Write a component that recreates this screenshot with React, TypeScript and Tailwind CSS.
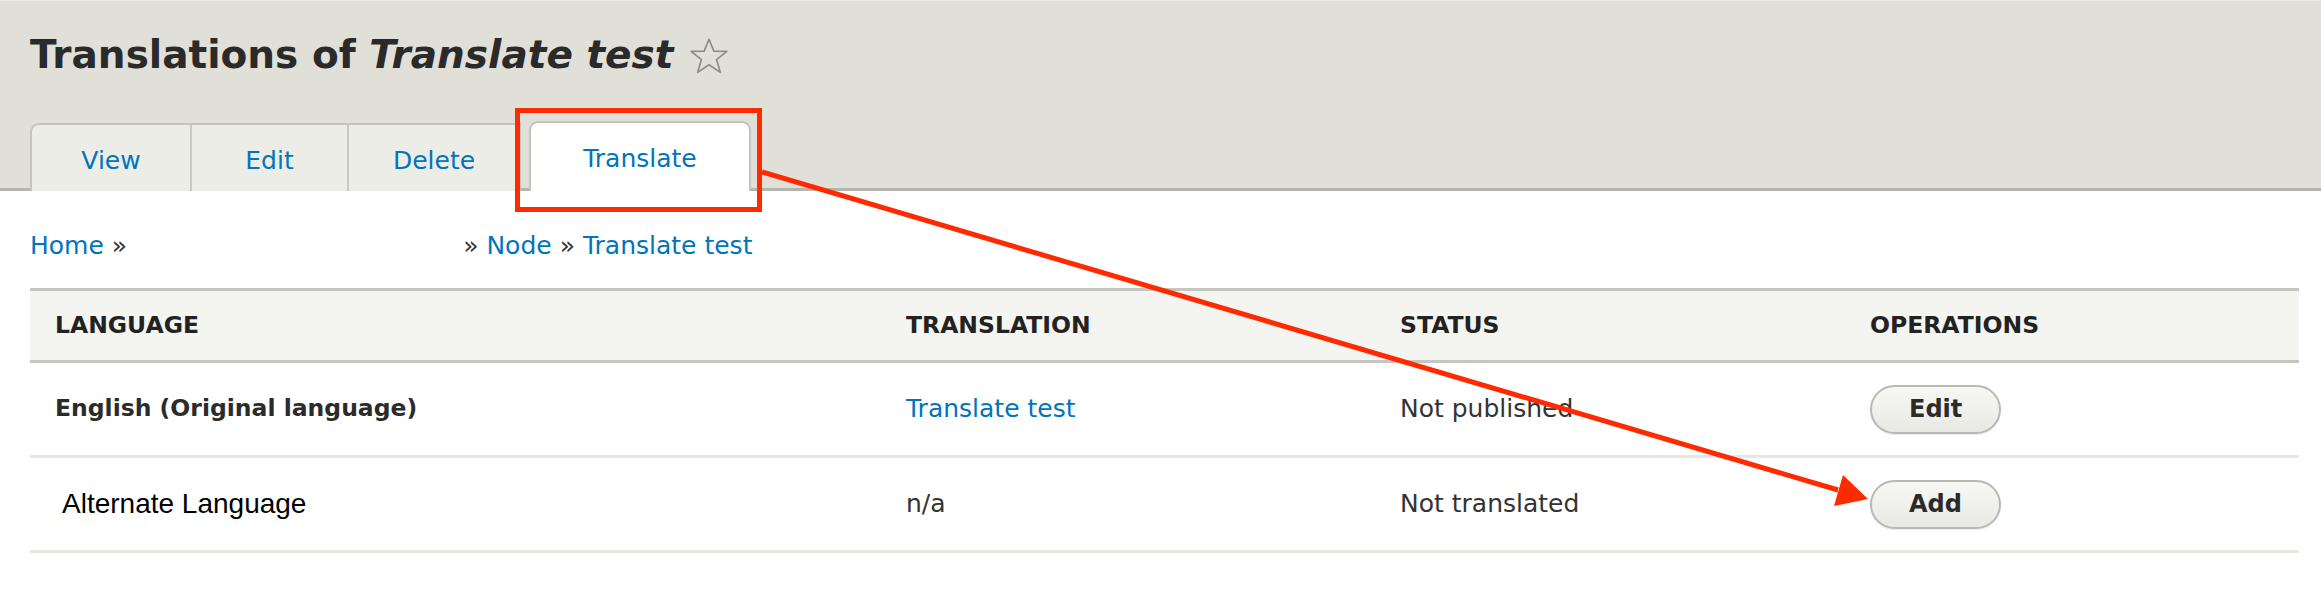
import React from "react";

const font = { fontFamily: '"DejaVu Sans", "Lucida Grande", sans-serif' };

function Star() {
  return (
    <svg width="42" height="38" viewBox="0 0 40 36" className="ml-[15px] self-center mt-[2px]">
      <polygon
        points="20,2 24.6,13.4 37,13.6 27.2,21.4 30.8,33.6 20,26.4 9.2,33.6 12.8,21.4 3,13.6 15.4,13.4"
        fill="none"
        stroke="#8d8d82"
        strokeWidth="1.6"
        strokeLinejoin="round"
      />
    </svg>
  );
}

function Btn({ label }: { label: string }) {
  return (
    <button className="h-[49px] px-[37px] rounded-full border-2 border-[#b9b9b4] bg-gradient-to-b from-[#f7f7f4] to-[#e9e9e4] text-[24px] font-bold text-[#2b2b2b] leading-none shadow-[0_1px_1px_rgba(0,0,0,0.08)]">
      {label}
    </button>
  );
}

export default function App() {
  return (
    <div className="relative w-[2321px] h-[605px] bg-white overflow-hidden text-[#333]" style={font}>
      {/* Header */}
      <div className="h-[191px] bg-[#e0dfd8] border-t border-[#ebebe6] border-b-[3px] border-b-[#b5b5b0] pl-[30px] flex flex-col">
        <div className="flex items-start pt-[30px]">
          <h1 className="text-[39px] leading-[48px] font-bold text-[#2a2a2a] whitespace-nowrap">
            Translations of <em className="italic">Translate test</em>
          </h1>
          <Star />
        </div>
        <div className="mt-auto flex items-end -mb-[3px]">
          <div className="flex h-[68px] bg-[#edede8] border-2 border-b-0 border-[#c4c4bf] rounded-tl-[9px]">
            <a className="w-[160px] pt-[6px] flex items-center justify-center text-[25px] text-[#0074bd] border-r-2 border-[#c9c9c4]">View</a>
            <a className="w-[157px] pt-[6px] flex items-center justify-center text-[25px] text-[#0074bd] border-r-2 border-[#c9c9c4]">Edit</a>
            <a className="w-[170px] pt-[6px] flex items-center justify-center text-[25px] text-[#0074bd]">Delete</a>
          </div>
          <a className="ml-[8px] w-[222px] h-[70px] pt-[4px] flex items-center justify-center bg-white border-2 border-b-0 border-[#c4c4bf] rounded-t-[9px] text-[25px] text-[#0074bd] relative z-10">
            Translate
          </a>
        </div>
      </div>

      {/* Body */}
      <div className="pl-[30px] pr-[22px]">
        <div className="mt-[39px] h-[32px] flex items-center text-[25px] text-[#0074bd] leading-[32px] whitespace-nowrap">
          <a>Home</a>
          <span className="text-[#333] ml-[8px]">»</span>
          <span className="w-[336px]" />
          <span className="text-[#333]">»</span>
          <a className="ml-[8px]">Node</a>
          <span className="text-[#333] ml-[8px]">»</span>
          <a className="ml-[8px]">Translate test</a>
        </div>

        <div className="mt-[26px]">
          <div className="grid grid-cols-[851px_494px_470px_1fr] h-[75px] items-center bg-[#f4f4f0] border-y-[3px] border-[#c6c6c1] text-[23.5px] font-bold uppercase text-[#222]">
            <div className="pl-[25px]">Language</div>
            <div className="pl-[25px]">Translation</div>
            <div className="pl-[25px]">Status</div>
            <div className="pl-[25px]">Operations</div>
          </div>
          <div className="grid grid-cols-[851px_494px_470px_1fr] h-[95px] items-center border-b-[3px] border-[#e7e6e1] text-[25px]">
            <div className="pl-[25px] font-bold text-[23.5px] text-[#2b2b2b]">English (Original language)</div>
            <div className="pl-[25px] text-[#0074bd]">Translate test</div>
            <div className="pl-[25px] text-[#333]">Not published</div>
            <div className="pl-[25px]"><Btn label="Edit" /></div>
          </div>
          <div className="grid grid-cols-[851px_494px_470px_1fr] h-[95px] items-center border-b-[3px] border-[#e7e6e1] text-[25px]">
            <div className="pl-[32px] text-[28px] text-black" style={{ fontFamily: '"Liberation Sans", Arial, sans-serif' }}>Alternate Language</div>
            <div className="pl-[25px] text-[#333]">n/a</div>
            <div className="pl-[25px] text-[#333]">Not translated</div>
            <div className="pl-[25px]"><Btn label="Add" /></div>
          </div>
        </div>
      </div>

      {/* Annotation overlay */}
      <div className="absolute left-[515px] top-[108px] w-[247px] h-[104px] border-[5px] border-[#ff2a00] z-20 pointer-events-none" />
      <svg className="absolute left-0 top-0 z-20 pointer-events-none" width="2321" height="605" viewBox="0 0 2321 605">
        <line x1="762" y1="172" x2="1838" y2="490" stroke="#ff2a00" strokeWidth="5" />
        <polygon points="1868,499 1834,506 1843,475" fill="#ff2a00" />
      </svg>
    </div>
  );
}
